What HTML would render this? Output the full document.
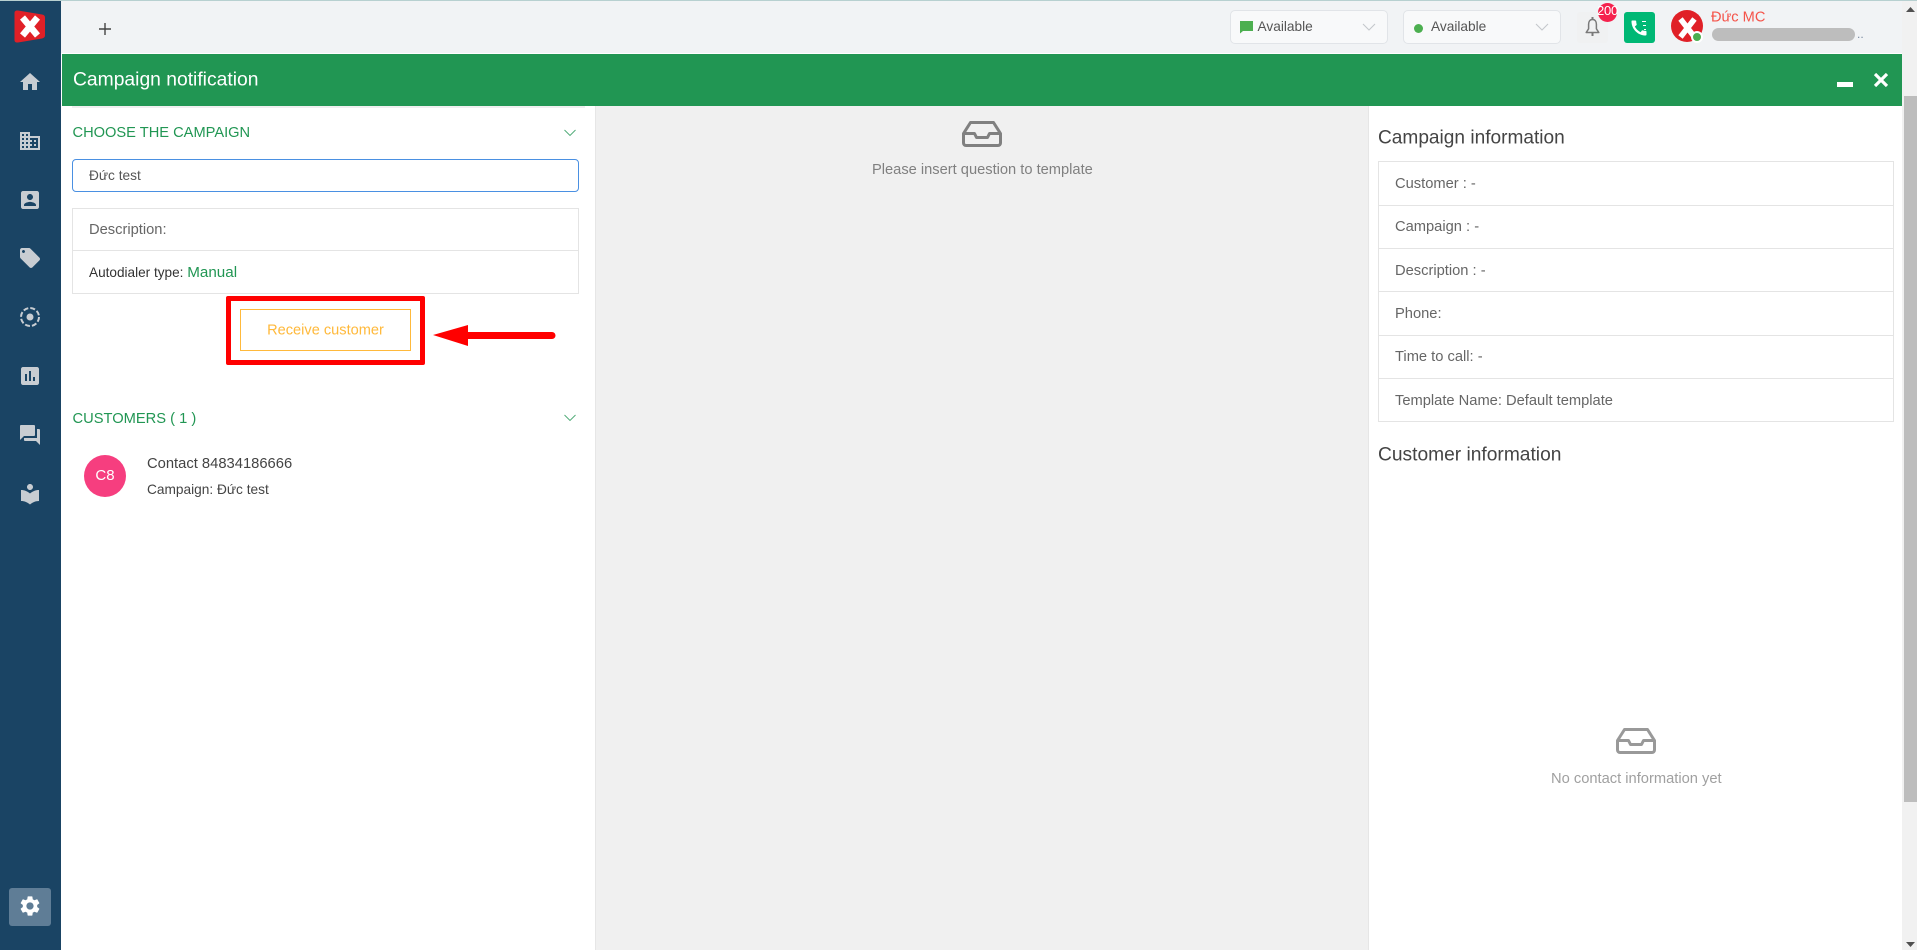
<!DOCTYPE html>
<html lang="en"><head><meta charset="utf-8"><title>Campaign notification</title>
<style>
html,body{margin:0;padding:0;width:1917px;height:950px;overflow:hidden;background:#fff}
body{position:relative;font-family:"Liberation Sans","Noto Sans CJK SC",sans-serif;font-size:14.7px;color:#555}
.a{position:absolute;box-sizing:border-box}
.t{position:absolute;white-space:nowrap;transform:translateY(-50%);line-height:1.2}
svg{display:block;position:absolute}
.ic{fill:#c8cdd2}
</style></head><body>

<!-- top bar -->
<div class="a" style="left:0;top:0;width:1917px;height:1px;background:#b7d0d0"></div>
<div class="a" style="left:61px;top:1px;width:1856px;height:52px;background:#f1f3f5"></div>
<div class="a" style="left:61px;top:53px;width:1841px;height:1px;background:#fff"></div>
<svg style="left:97px;top:21px" width="16" height="16" viewBox="0 0 16 16"><path d="M8 2v12M2 8h12" stroke="#444" stroke-width="1.4"/></svg>

<!-- selects -->
<div class="a" style="left:1230px;top:10px;width:158px;height:34px;background:#f8f9fa;border:1px solid #e1e4e8;border-radius:5px"></div>
<svg style="left:1240px;top:20px" width="14" height="14" viewBox="0 0 14 14"><path d="M0 1h13v10H3l-3 2.500z" fill="#4caf50"/></svg>
<div class="t" style="left:1257.500px;top:27px;font-size:13.700px;color:#555">Available</div>
<svg style="left:1362px;top:23px" width="14" height="9" viewBox="0 0 14 9"><path d="M1 1l6 6 6-6" fill="none" stroke="#c4c8cc" stroke-width="1.100"/></svg>
<div class="a" style="left:1403px;top:10px;width:158px;height:34px;background:#f8f9fa;border:1px solid #e1e4e8;border-radius:5px"></div>
<div class="a" style="left:1414px;top:24px;width:9px;height:9px;border-radius:50%;background:#4caf50"></div>
<div class="t" style="left:1431px;top:27px;font-size:13.700px;color:#555">Available</div>
<svg style="left:1535px;top:23px" width="14" height="9" viewBox="0 0 14 9"><path d="M1 1l6 6 6-6" fill="none" stroke="#c4c8cc" stroke-width="1.100"/></svg>

<!-- bell -->
<div class="a" style="left:1577px;top:12px;width:31px;height:31px;background:#f0f1f2;border-radius:3px"></div>
<svg style="left:1585px;top:17px" width="15" height="21" viewBox="0 0 15 21"><path d="M7.500 2.500c-2.700 0-3.900 2.200-3.900 4.800v4.500L1.200 15.500h12.600l-2.400-3.700V7.300c0-2.600-1.200-4.800-3.900-4.800z" fill="none" stroke="#7a7a7a" stroke-width="1.500" stroke-linejoin="round"/><path d="M7.500 0v2.500M7.500 16v3" stroke="#7a7a7a" stroke-width="2"/></svg>
<div class="a" style="left:1598px;top:3px;width:19px;height:19px;border-radius:50%;background:#f5224d"></div>
<div class="t" style="left:1596px;top:11px;width:23px;text-align:center;font-size:13px;color:#fff;letter-spacing:-.2px">200</div>

<!-- phone -->
<div class="a" style="left:1624px;top:12px;width:31px;height:31px;background:#00b875;border-radius:3px"></div>
<svg style="left:1629px;top:18px" width="20" height="20" viewBox="0 0 24 24"><path d="M20.010 15.380c-1.230 0-2.420-.2-3.530-.56-.35-.12-.74-.03-1.010.24l-1.570 1.970c-2.830-1.350-5.480-3.900-6.890-6.830l1.950-1.660c.27-.28.35-.67.24-1.020-.37-1.110-.56-2.300-.56-3.530 0-.54-.45-.99-.99-.99H4.190C3.650 3 3 3.240 3 3.990 3 13.280 10.730 21 20.010 21c.71 0 .99-.63.99-1.180v-3.450c0-.54-.45-.99-.99-.99z" fill="#fff"/></svg>
<div class="a" style="left:1642px;top:21px;width:4px;height:1.200px;background:#fff"></div>
<div class="a" style="left:1643px;top:25px;width:3px;height:1.200px;background:#fff"></div>
<div class="a" style="left:1644px;top:29px;width:2px;height:1.200px;background:#fff"></div>

<!-- user -->
<div class="a" style="left:1671px;top:10px;width:32px;height:32px;border-radius:50%;background:#e02027"></div>
<svg style="left:1671px;top:10px" width="32" height="32" viewBox="0 0 32 32"><path d="M9.500 9l14 18M23.500 9l-14 18" stroke="#fff" stroke-width="5.500"/></svg>
<div class="a" style="left:1691px;top:31px;width:12px;height:12px;border-radius:50%;background:#4caf50;border:2px solid #fff"></div>
<div class="t" style="left:1711px;top:18px;font-size:14.600px;color:#f5544a">Đức MC</div>
<div class="a" style="left:1712px;top:28px;width:143px;height:13px;border-radius:7px;background:#bdbdbd"></div>
<div class="t" style="left:1857px;top:34px;font-size:12px;color:#7a8aa0">..</div>

<!-- sidebar -->
<div class="a" style="left:0;top:1px;width:61px;height:949px;background:#1a4464"></div>
<svg style="left:14px;top:10px" width="32" height="33" viewBox="0 0 32 33"><path d="M4 0.500L28 4.500c2 .3 3 1.300 3 3v18c0 1.500-1 2.500-3 3L4 32.500c-2 .3-3.500-.5-3.500-2.500V3C.5 1 2 .2 4 .5z" fill="#e02027"/><path d="M10 9l15 18M25 9L10 27" transform="translate(-1.500 -1.500)" stroke="#fff" stroke-width="6.500"/></svg>
<svg class="ic" style="left:17.500px;top:70px" width="24" height="24" viewBox="0 0 24 24"><path d="M10 20v-6h4v6h5v-8h3L12 3 2 12h3v8z"/></svg>
<svg class="ic" style="left:17.500px;top:129px" width="24" height="24" viewBox="0 0 24 24"><path d="M12 7V3H2v18h20V7H10zM6 19H4v-2h2v2zm0-4H4v-2h2v2zm0-4H4V9h2v2zm0-4H4V5h2v2zm4 12H8v-2h2v2zm0-4H8v-2h2v2zm0-4H8V9h2v2zm0-4H8V5h2v2zm10 12h-8v-2h2v-2h-2v-2h2v-2h-2V9h8v10zm-2-8h-2v2h2v-2zm0 4h-2v2h2v-2z"/></svg>
<svg class="ic" style="left:17.500px;top:188px" width="24" height="24" viewBox="0 0 24 24"><path d="M19 3H5c-1.100 0-2 .9-2 2v14c0 1.100.9 2 2 2h14c1.100 0 2-.9 2-2V5c0-1.100-.9-2-2-2zm-7 3c1.650 0 3 1.350 3 3s-1.350 3-3 3-3-1.350-3-3 1.350-3 3-3zm6 12H6v-1c0-2 4-3.100 6-3.100s6 1.100 6 3.100v1z"/></svg>
<svg class="ic" style="left:17.500px;top:246px" width="24" height="24" viewBox="0 0 24 24"><path d="M21.410 11.580l-9-9C12.050 2.220 11.550 2 11 2H4c-1.100 0-2 .9-2 2v7c0 .55.220 1.050.59 1.420l9 9c.36.360.86.580 1.410.580.550 0 1.050-.220 1.410-.590l7-7c.370-.360.590-.860.590-1.410 0-.550-.230-1.060-.590-1.420zM5.500 7C4.670 7 4 6.330 4 5.500S4.670 4 5.500 4 7 4.670 7 5.500 6.330 7 5.500 7z"/></svg>
<svg style="left:17.500px;top:305px" width="24" height="24" viewBox="0 0 24 24"><circle cx="12" cy="12" r="9" fill="none" stroke="#c8cdd2" stroke-width="2" stroke-dasharray="5 2.070"/><circle cx="12" cy="12" r="3.500" fill="#c8cdd2"/></svg>
<svg class="ic" style="left:17.500px;top:364px" width="24" height="24" viewBox="0 0 24 24"><path d="M19 3H5c-1.100 0-2 .9-2 2v14c0 1.100.9 2 2 2h14c1.100 0 2-.9 2-2V5c0-1.100-.9-2-2-2zM9 17H7v-7h2v7zm4 0h-2V7h2v10zm4 0h-2v-4h2v4z"/></svg>
<svg class="ic" style="left:17.500px;top:423px" width="24" height="24" viewBox="0 0 24 24"><path d="M21 6h-2v9H6v2c0 .55.45 1 1 1h11l4 4V7c0-.55-.45-1-1-1zm-4 6V3c0-.55-.45-1-1-1H3c-.55 0-1 .45-1 1v14l4-4h10c.55 0 1-.45 1-1z"/></svg>
<svg class="ic" style="left:17.500px;top:482px" width="24" height="24" viewBox="0 0 24 24"><path d="M12 11.550C9.640 9.350 6.480 8 3 8v11c3.480 0 6.640 1.350 9 3.550 2.360-2.190 5.520-3.550 9-3.550V8c-3.480 0-6.640 1.350-9 3.550zM12 8c1.660 0 3-1.340 3-3s-1.340-3-3-3-3 1.340-3 3 1.340 3 3 3z"/></svg>
<div class="a" style="left:9px;top:888px;width:42px;height:38px;background:#5f7d96;border-radius:3px"></div>
<svg style="left:17.500px;top:894px" width="24" height="24" viewBox="0 0 24 24" fill="#fff"><path d="M19.140 12.940c.04-.3.060-.61.060-.94 0-.32-.020-.64-.070-.94l2.030-1.580c.18-.14.230-.41.120-.61l-1.920-3.320c-.12-.22-.37-.29-.59-.22l-2.390.96c-.5-.38-1.030-.7-1.620-.94l-.36-2.540c-.04-.24-.24-.41-.48-.41h-3.840c-.24 0-.43.170-.47.410l-.36 2.540c-.59.240-1.130.570-1.620.940l-2.390-.96c-.22-.080-.47 0-.59.220L2.740 8.870c-.12.210-.08.470.12.610l2.030 1.580c-.05.3-.09.63-.09.940s.02.640.07.940l-2.030 1.580c-.18.140-.23.410-.12.610l1.920 3.320c.12.220.37.290.59.220l2.390-.96c.5.380 1.030.7 1.620.94l.36 2.540c.05.240.24.410.48.410h3.840c.24 0 .44-.17.470-.41l.36-2.540c.59-.24 1.130-.56 1.620-.94l2.390.96c.22.080.47 0 .59-.22l1.920-3.320c.12-.22.07-.47-.12-.61l-2.010-1.580zM12 15.600c-1.980 0-3.600-1.620-3.600-3.600s1.620-3.600 3.600-3.600 3.600 1.620 3.600 3.600-1.620 3.600-3.600 3.600z"/></svg>

<!-- green header -->
<div class="a" style="left:62px;top:54px;width:1840px;height:52px;background:#219653"></div>
<div class="t" style="left:73px;top:80px;font-size:19.300px;color:#fff">Campaign notification</div>
<div class="a" style="left:1837px;top:82px;width:16px;height:5px;background:#fff"></div>
<svg style="left:1874px;top:73px" width="14" height="14" viewBox="0 0 14 14"><path d="M1 1l12 12M13 1L1 13" stroke="#fff" stroke-width="3.200"/></svg>

<!-- panels -->
<div class="a" style="left:72px;top:106px;width:513px;height:2px;background:#efefef"></div>
<div class="a" style="left:595px;top:106px;width:774px;height:844px;background:#f0f0f0;border-left:1px solid #e6e6e6;border-right:1px solid #e6e6e6"></div>

<!-- left panel -->
<div class="t" style="left:72.500px;top:134px;font-size:14.650px;color:#219653">CHOOSE THE CAMPAIGN</div>
<svg style="left:564px;top:129px" width="12" height="8" viewBox="0 0 12 8"><path d="M.5 1l5.500 5.500L11.500 1" fill="none" stroke="#4aa873" stroke-width=".9"/></svg>
<div class="a" style="left:72px;top:159px;width:507px;height:33px;border:1px solid #4a90e2;border-radius:4px;background:#fff"></div>
<div class="t" style="left:89px;top:176px;font-size:13.700px;color:#555">Đức test</div>
<div class="a" style="left:72px;top:208px;width:507px;height:86px;border:1px solid #e4e4e4"></div>
<div class="a" style="left:72px;top:250px;width:507px;height:1px;background:#e4e4e4"></div>
<div class="t" style="left:89px;top:231px;font-size:14.700px;color:#666">Description:</div>
<div class="t" style="left:89px;top:272.500px;font-size:13.600px;color:#333">Autodialer type: <span style="color:#219653;font-size:15.200px">Manual</span></div>

<div class="a" style="left:226px;top:296px;width:199px;height:69px;border:5px solid #f00;border-radius:2px"></div>
<div class="a" style="left:240px;top:309px;width:171px;height:42px;border:1px solid #ffb93b"></div>
<div class="t" style="left:240px;top:331px;width:171px;text-align:center;font-size:14.600px;color:#ffb93b">Receive customer</div>
<svg style="left:432px;top:324px" width="124" height="24" viewBox="0 0 124 24"><path d="M1 11L36 1v7h84a3.500 3.500 0 0 1 0 7H36v7z" fill="#f00"/></svg>

<div class="t" style="left:72.500px;top:420px;font-size:14.700px;color:#219653">CUSTOMERS ( 1 )</div>
<svg style="left:564px;top:414px" width="12" height="8" viewBox="0 0 12 8"><path d="M.5 1l5.500 5.500L11.500 1" fill="none" stroke="#4aa873" stroke-width=".9"/></svg>
<div class="a" style="left:84px;top:455px;width:42px;height:42px;border-radius:50%;background:#f63e7f"></div>
<div class="t" style="left:84px;top:476px;width:42px;text-align:center;font-size:15px;color:#fff">C8</div>
<div class="t" style="left:147px;top:465px;font-size:14.750px;color:#444">Contact 84834186666</div>
<div class="t" style="left:147px;top:490px;font-size:13.700px;color:#444">Campaign: Đức test</div>

<!-- middle -->
<svg style="left:962px;top:121px" width="40" height="26" viewBox="0 0 40 26"><path d="M1.500 12.500L8.500 1.500h23l7 11V22a2.500 2.500 0 0 1-2.500 2.500H4A2.500 2.500 0 0 1 1.500 22zM1.500 12.500h11l2 4h11l2-4h11" fill="none" stroke="#808080" stroke-width="3" stroke-linejoin="round"/></svg>
<div class="t" style="left:872px;top:171px;font-size:14.670px;color:#808080">Please insert question to template</div>

<!-- right -->
<div class="t" style="left:1378px;top:139px;font-size:19.100px;color:#444">Campaign information</div>
<div class="a" style="left:1378px;top:161px;width:516px;height:261px;border:1px solid #e4e4e4"></div>
<div class="a" style="left:1378px;top:205px;width:516px;height:1px;background:#e4e4e4"></div>
<div class="a" style="left:1378px;top:248px;width:516px;height:1px;background:#e4e4e4"></div>
<div class="a" style="left:1378px;top:291px;width:516px;height:1px;background:#e4e4e4"></div>
<div class="a" style="left:1378px;top:335px;width:516px;height:1px;background:#e4e4e4"></div>
<div class="a" style="left:1378px;top:378px;width:516px;height:1px;background:#e4e4e4"></div>
<div class="t" style="left:1395px;top:185px;color:#666">Customer : -</div>
<div class="t" style="left:1395px;top:228px;color:#666">Campaign : -</div>
<div class="t" style="left:1395px;top:272px;color:#666">Description : -</div>
<div class="t" style="left:1395px;top:315px;color:#666">Phone:</div>
<div class="t" style="left:1395px;top:358px;color:#666">Time to call: -</div>
<div class="t" style="left:1395px;top:402px;color:#666">Template Name: Default template</div>
<div class="t" style="left:1378px;top:455px;font-size:19.200px;color:#444">Customer information</div>
<svg style="left:1616px;top:728px" width="40" height="26" viewBox="0 0 40 26"><path d="M1.500 12.500L8.500 1.500h23l7 11V22a2.500 2.500 0 0 1-2.500 2.500H4A2.500 2.500 0 0 1 1.500 22zM1.500 12.500h11l2 4h11l2-4h11" fill="none" stroke="#999" stroke-width="3" stroke-linejoin="round"/></svg>
<div class="t" style="left:1551px;top:780px;font-size:14.700px;color:#a0a0a0">No contact information yet</div>

<!-- scrollbar -->
<div class="a" style="left:1902px;top:1px;width:15px;height:949px;background:#f1f1f1"></div>
<div class="a" style="left:1904px;top:96px;width:13px;height:706px;background:#bdbdbd"></div>
<svg style="left:1906px;top:7px" width="9" height="6" viewBox="0 0 9 6"><path d="M4.500 0L9 5H0z" fill="#505050"/></svg>
<svg style="left:1906px;top:941px" width="9" height="6" viewBox="0 0 9 6"><path d="M4.500 6L9 1H0z" fill="#505050"/></svg>
</body></html>
